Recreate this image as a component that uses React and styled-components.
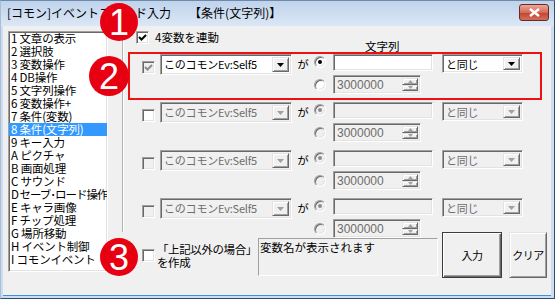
import React from 'react';
import styled, { createGlobalStyle, css } from 'styled-components';

const GlobalStyle = createGlobalStyle`
	html, body {
		margin: 0;
		padding: 0;
		background: #ffffff;
	}
	body {
		font-family: "Noto Sans CJK JP", "Liberation Sans", sans-serif;
		font-size: 11px;
		color: #000;
	}
`;

const FONT = `"Noto Sans CJK JP", "Liberation Sans", sans-serif`;

const sunken = css`
	border: 1px solid;
	border-color: #a0a0a0 #ffffff #ffffff #a0a0a0;
	box-shadow: inset 1px 1px 0 #696969, inset -1px -1px 0 #e3e3e3;
`;

const raised = css`
	border: 1px solid;
	border-color: #e3e3e3 #696969 #696969 #e3e3e3;
	box-shadow: inset 1px 1px 0 #ffffff, inset -1px -1px 0 #a0a0a0;
	background: #f0f0f0;
`;

const Window = styled.div`
	position: relative;
	width: 555px;
	height: 299px;
	box-sizing: border-box;
	display: flex;
	flex-direction: column;
	background: #cddcee;
	border: 1px solid #2f4e70;
	border-top-color: #6f8aa8;
	border-left-color: #a9bfd8;
	padding: 0 3px 2px 2px;
	overflow: hidden;
	font-family: ${FONT};
`;

const TitleBar = styled.div`
	height: 25px;
	flex-shrink: 0;
	display: flex;
	align-items: center;
	padding-left: 6px;
	margin: 0 -3px 0 -2px;
	background: linear-gradient(#bfd3ec, #dbe7f5);
	font-size: 12px;
	line-height: 14px;
	color: #000;
`;

const TitleText = styled.span`
	white-space: pre;
	margin-top: -2px;
`;

const CloseButton = styled.div`
	margin-left: auto;
	margin-right: 5px;
	margin-top: -3px;
	width: 30px;
	height: 17px;
	box-sizing: border-box;
	border: 1px solid #6b2a20;
	border-radius: 3px;
	background: linear-gradient(#e9a99a 0%, #d56a58 50%, #c3432d 51%, #d0705c 100%);
	display: flex;
	align-items: center;
	justify-content: center;
`;

const Client = styled.div`
	flex: 1;
	display: flex;
	background: #f0f0f0;
	border-bottom: 1px solid #3b93d6;
`;

const ListBox = styled.ul`
	list-style: none;
	margin: 5px 0 0 5px;
	padding: 0;
	width: 100px;
	height: 241px;
	box-sizing: border-box;
	background: #ffffff;
	${sunken};
	font-size: 11.5px;
	line-height: 13px;
	overflow: hidden;
`;

const ListItem = styled.li`
	padding-left: 2px;
	height: 13px;
	white-space: nowrap;
	letter-spacing: ${(p) => (p.$tight ? '-1px' : '-0.2px')};
	background: ${(p) => (p.$selected ? '#3399ff' : 'transparent')};
	color: ${(p) => (p.$selected ? '#ffffff' : '#000000')};
`;

const Splitter = styled.div`
	margin-left: 14px;
	width: 0;
	height: 206px;
	border-left: 1px solid #b4b4b4;
	border-right: 1px solid #ffffff;
`;

const Panel = styled.div`
	margin-left: 4px;
	padding-top: 5px;
	display: flex;
	flex-direction: column;
	align-items: flex-start;
`;

const TopRow = styled.div`
	display: flex;
	height: 21px;
	padding-left: 8px;
`;

const CheckLabel = styled.label`
	display: flex;
	align-items: flex-start;
	gap: ${(p) => p.$gap || 6}px;
	width: ${(p) => (p.$width ? `${p.$width}px` : 'auto')};
	font-size: 11.5px;
	line-height: 13px;
	white-space: nowrap;
`;

const ColumnHeader = styled.div`
	margin-top: 9px;
	font-size: 11.5px;
	line-height: 13px;
`;

const Block = styled.div`
	width: 414px;
	height: 48px;
	box-sizing: border-box;
	border: 2px solid ${(p) => (p.$marked ? '#ee1111' : 'transparent')};
	display: flex;
	align-items: flex-start;
	padding-left: 12px;
`;

const CheckBox = styled.div`
	width: 13px;
	height: 13px;
	box-sizing: border-box;
	flex-shrink: 0;
	margin-top: ${(p) => p.$top || 0}px;
	${sunken};
	background: ${(p) => (p.$disabled ? '#f0f0f0' : '#ffffff')};
	display: flex;
	align-items: center;
	justify-content: center;
`;

const Combo = styled.div`
	display: flex;
	width: ${(p) => p.$width}px;
	height: ${(p) => p.$height}px;
	margin-left: ${(p) => p.$left || 0}px;
	box-sizing: border-box;
	padding: 2px;
	${sunken};
	background: ${(p) => (p.$disabled ? '#f0f0f0' : '#ffffff')};
`;

const ComboText = styled.div`
	flex: 1;
	padding-left: 1px;
	font-size: 11px;
	line-height: 15px;
	white-space: nowrap;
	letter-spacing: -0.2px;
	color: ${(p) => (p.$disabled ? '#6d6d6d' : '#000000')};
`;

const DropButton = styled.div`
	width: 17px;
	flex-shrink: 0;
	box-sizing: border-box;
	${raised};
	display: flex;
	align-items: center;
	justify-content: center;
`;

const Ga = styled.div`
	width: 22px;
	text-align: center;
	font-size: 11.5px;
	line-height: 18px;
	margin-top: 1px;
`;

const Choices = styled.div`
	display: flex;
	flex-direction: column;
	gap: 2px;
`;

const ChoiceLine = styled.div`
	display: flex;
	align-items: flex-start;
`;

const Radio = styled.div`
	width: 12px;
	height: 12px;
	box-sizing: border-box;
	margin-top: ${(p) => p.$top || 0}px;
	margin-right: 7px;
	border-radius: 50%;
	border: 1px solid;
	border-color: #a0a0a0 #ffffff #ffffff #a0a0a0;
	box-shadow: inset 1px 1px 0 #696969, inset -1px -1px 0 #e3e3e3;
	background: ${(p) => (p.$disabled ? '#f0f0f0' : '#ffffff')};
	display: flex;
	align-items: center;
	justify-content: center;

	&::after {
		content: '';
		display: ${(p) => (p.$checked ? 'block' : 'none')};
		width: 4px;
		height: 4px;
		border-radius: 50%;
		background: ${(p) => (p.$disabled ? '#8c8c8c' : '#000000')};
	}
`;

const TextField = styled.div`
	width: ${(p) => p.$width}px;
	height: ${(p) => p.$height}px;
	box-sizing: border-box;
	${sunken};
	background: ${(p) => (p.$disabled ? '#f0f0f0' : '#ffffff')};
	display: flex;
	padding: 2px;
`;

const FieldText = styled.div`
	flex: 1;
	padding-left: 1px;
	font-family: "Liberation Sans", sans-serif;
	font-size: 12px;
	line-height: 15px;
	color: #6d6d6d;
`;

const Spin = styled.div`
	width: 16px;
	display: flex;
	flex-direction: column;
`;

const SpinButton = styled.div`
	flex: 1;
	box-sizing: border-box;
	${raised};
	display: flex;
	align-items: center;
	justify-content: center;
`;

const BottomRow = styled.div`
	display: flex;
	align-items: flex-start;
	margin-top: -12px;
	padding-left: 14px;
`;

const Note = styled.span`
	display: block;
	margin-top: 11px;
	line-height: 13px;
	letter-spacing: -0.4px;
`;

const InfoBox = styled.div`
	width: 180px;
	height: 38px;
	margin-top: 6px;
	box-sizing: border-box;
	border: 1px solid;
	border-color: #a0a0a0 #ffffff #ffffff #a0a0a0;
	font-size: 11.5px;
	line-height: 14px;
	padding: 1px 0 0 1px;
	white-space: nowrap;
	overflow: hidden;
`;

const PushButton = styled.div`
	width: ${(p) => p.$width}px;
	height: 46px;
	margin-left: ${(p) => p.$left}px;
	box-sizing: border-box;
	${raised};
	${(p) =>
		p.$default &&
		css`
			border: 1px solid #3c3c3c;
			box-shadow: inset 1px 1px 0 #ffffff, inset -1px -1px 0 #696969, inset -2px -2px 0 #a0a0a0;
		`};
	display: flex;
	align-items: center;
	justify-content: center;
	font-size: 11px;
	letter-spacing: -0.5px;
`;

const Marker = styled.div`
	position: absolute;
	left: ${(p) => p.$x - p.$r}px;
	top: ${(p) => p.$y - p.$r}px;
	width: ${(p) => p.$r * 2}px;
	height: ${(p) => p.$r * 2}px;
	border-radius: 50%;
	background: #e60012;
	color: #ffffff;
	font-family: "Liberation Sans", sans-serif;
	font-size: 36px;
	line-height: ${(p) => p.$r * 2 + 1}px;
	text-align: center;
`;

const Check = ({ color }) => (
	<svg width="9" height="9" viewBox="0 0 9 9">
		<polyline points="1,4 3.5,6.5 8,2" fill="none" stroke={color} strokeWidth="2" />
	</svg>
);

const Arrow = ({ color = '#000', w = 7 }) => (
	<svg width={w} height={Math.ceil(w / 2)} viewBox={`0 0 ${w} ${Math.ceil(w / 2)}`}>
		<polygon points={`0,0 ${w},0 ${w / 2},${Math.ceil(w / 2)}`} fill={color} />
	</svg>
);

const SpinArrow = ({ up }) => (
	<svg width="5" height="3" viewBox="0 0 5 3">
		<polygon points={up ? '0,3 5,3 2.5,0' : '0,0 5,0 2.5,3'} fill="#a0a0a0" />
	</svg>
);

const commands = [
	'1 文章の表示',
	'2 選択肢',
	'3 変数操作',
	'4 DB操作',
	'5 文字列操作',
	'6 変数操作+',
	'7 条件(変数)',
	'8 条件(文字列)',
	'9 キー入力',
	'A ピクチャ',
	'B 画面処理',
	'C サウンド',
	'D セーブ･ロード操作',
	'E キャラ画像',
	'F チップ処理',
	'G 場所移動',
	'H イベント制御',
	'I コモンイベント'
];

const conditions = [
	{ marked: true, checked: true, disabled: false },
	{ marked: false, checked: false, disabled: true, boxEnabled: true },
	{ marked: false, checked: false, disabled: true },
	{ marked: false, checked: false, disabled: true }
];

const ConditionRow = ({ marked, checked, disabled, boxEnabled }) => (
	<Block $marked={marked}>
		<CheckBox $top={7} $disabled={!boxEnabled}>
			{checked && <Check color="#8c8c8c" />}
		</CheckBox>
		<Combo $width={132} $height={21} $left={5} $disabled={disabled}>
			<ComboText $disabled={disabled}>このコモンEv:Self5</ComboText>
			<DropButton>
				<Arrow color={disabled ? '#a0a0a0' : '#000'} />
			</DropButton>
		</Combo>
		<Ga>が</Ga>
		<Choices>
			<ChoiceLine>
				<Radio $top={2} $checked $disabled={disabled} />
				<TextField $width={100} $height={17} $disabled={disabled} />
				<Combo $width={81} $height={19} $left={9} $disabled={disabled}>
					<ComboText $disabled={disabled}>と同じ</ComboText>
					<DropButton>
						<Arrow color={disabled ? '#a0a0a0' : '#000'} />
					</DropButton>
				</Combo>
			</ChoiceLine>
			<ChoiceLine>
				<Radio $top={4} $disabled={disabled} />
				<TextField $width={88} $height={19} $disabled>
					<FieldText>3000000</FieldText>
					<Spin>
						<SpinButton>
							<SpinArrow up />
						</SpinButton>
						<SpinButton>
							<SpinArrow />
						</SpinButton>
					</Spin>
				</TextField>
			</ChoiceLine>
		</Choices>
	</Block>
);

const App = () => {
	return (
		<React.Fragment>
			<GlobalStyle />
			<Window>
				<TitleBar>
					<TitleText>[コモン]イベントコマンド入力　　【条件(文字列)】</TitleText>
					<CloseButton>
						<svg width="11" height="9" viewBox="0 0 11 9">
							<path d="M1 1 L10 8 M10 1 L1 8" stroke="#ffffff" strokeWidth="2.4" />
						</svg>
					</CloseButton>
				</TitleBar>
				<Client>
					<ListBox>
						{commands.map((c, i) => (
							<ListItem key={c} $selected={i === 7} $tight={i === 12}>
								{c}
							</ListItem>
						))}
					</ListBox>
					<Splitter />
					<Panel>
						<TopRow>
							<CheckLabel $width={229}>
								<CheckBox>
									<Check color="#000" />
								</CheckBox>
								4変数を連動
							</CheckLabel>
							<ColumnHeader>文字列</ColumnHeader>
						</TopRow>
						{conditions.map((c, i) => (
							<ConditionRow key={i} {...c} />
						))}
						<BottomRow>
							<CheckLabel $width={116} $gap={2}>
								<CheckBox $top={17} />
								<Note>
									「上記以外の場合」
									<br />
									を作成
								</Note>
							</CheckLabel>
							<InfoBox>変数名が表示されます</InfoBox>
							<PushButton $width={60} $left={4} $default>
								入力
							</PushButton>
							<PushButton $width={38} $left={7}>
								クリア
							</PushButton>
						</BottomRow>
					</Panel>
				</Client>
				<Marker $x={118} $y={21} $r={19}>1</Marker>
				<Marker $x={108} $y={75} $r={20}>2</Marker>
				<Marker $x={118} $y={256} $r={19}>3</Marker>
			</Window>
		</React.Fragment>
	);
};

export default App;
